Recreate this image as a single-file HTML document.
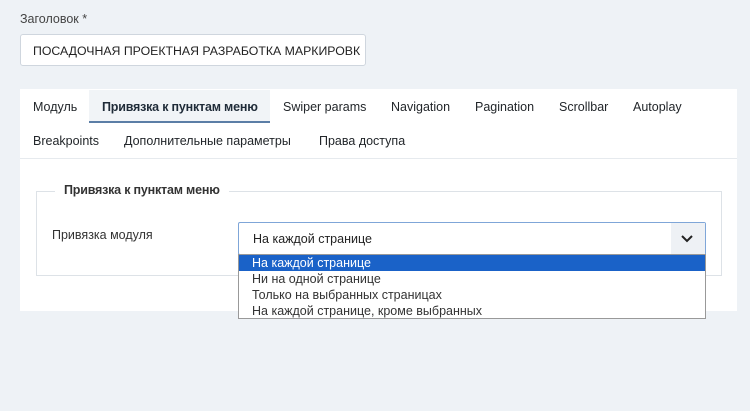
<!DOCTYPE html>
<html><head><meta charset="utf-8"><style>
*{margin:0;padding:0;box-sizing:border-box}
body{width:750px;height:411px;background:#eef2f6;font-family:"Liberation Sans","DejaVu Sans",sans-serif;color:#22262a;position:relative;overflow:hidden;font-size:12.5px}
.a{position:absolute;white-space:nowrap}
</style></head><body>
<div class="a" style="left:20px;top:12px;font-size:12.5px;color:#444">Заголовок *</div>
<div class="a" style="left:20px;top:34px;width:346px;height:32px;background:#fff;border:1px solid #cfd6de;border-radius:3px;padding:9px 12px;font-size:12.3px;color:#222;overflow:hidden">ПОСАДОЧНАЯ ПРОЕКТНАЯ РАЗРАБОТКА МАРКИРОВК</div>
<div class="a" style="left:20px;top:89px;width:717px;height:222px;background:#fff"></div>
<div class="a" style="left:89px;top:90px;width:181px;height:33px;background:#f1f4f7;border-bottom:2px solid #5b7ea6"></div>
<div class="a" style="left:33px;top:100px">Модуль</div>
<div class="a" style="left:102px;top:100px;font-weight:bold;color:#1f2b38;letter-spacing:-0.2px">Привязка к пунктам меню</div>
<div class="a" style="left:283px;top:100px">Swiper params</div>
<div class="a" style="left:391px;top:100px">Navigation</div>
<div class="a" style="left:475px;top:100px">Pagination</div>
<div class="a" style="left:559px;top:100px">Scrollbar</div>
<div class="a" style="left:633px;top:100px">Autoplay</div>
<div class="a" style="left:33px;top:134px">Breakpoints</div>
<div class="a" style="left:124px;top:134px">Дополнительные параметры</div>
<div class="a" style="left:319px;top:134px">Права доступа</div>
<div class="a" style="left:20px;top:158px;width:717px;height:1px;background:#e6eaee"></div>
<div class="a" style="left:36px;top:191px;width:686px;height:85px;border:1px solid #dde2e7"></div>
<div class="a" style="left:55px;top:183px;padding:0 9px;background:#fff;font-weight:bold;color:#333;letter-spacing:-0.2px">Привязка к пунктам меню</div>
<div class="a" style="left:52px;top:228px;color:#333">Привязка модуля</div>
<div class="a" style="left:238px;top:222px;width:468px;height:33px;background:#fff;border:1px solid #7fa6d8;border-radius:2px;padding:9px 14px;color:#222">На каждой странице</div>
<div class="a" style="left:671px;top:223px;width:34px;height:31px;background:#eef1f5"></div>
<svg class="a" style="left:680px;top:234px" width="14" height="10"><path d="M2 2 L7 7 L12 2" stroke="#222" stroke-width="2" fill="none"/></svg>
<div class="a" style="left:238px;top:254px;width:468px;height:65px;background:#fff;border:1px solid #999;font-size:12.5px;line-height:16px;color:#333">
<div style="background:#1a62c8;color:#fff;padding-left:13px">На каждой странице</div>
<div style="padding-left:13px">Ни на одной странице</div>
<div style="padding-left:13px">Только на выбранных страницах</div>
<div style="padding-left:13px">На каждой странице, кроме выбранных</div>
</div>
</body></html>
